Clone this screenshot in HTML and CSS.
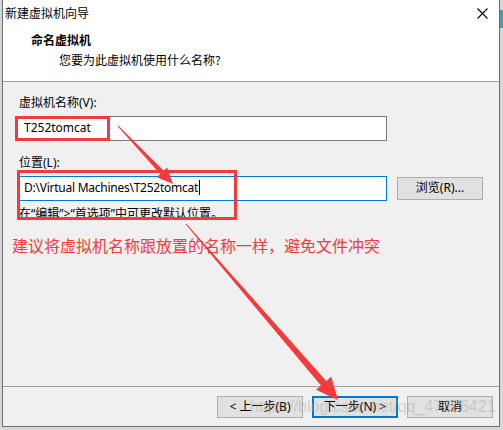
FILE: index.html
```html
<!DOCTYPE html>
<html lang="zh-CN">
<head>
<meta charset="utf-8">
<title>新建虚拟机向导</title>
<link rel="stylesheet" href="styles.css">
</head>
<body>
<div class="desk-strip"></div>
<div class="window">
  <div class="titlebar">
    <span class="title">新建虚拟机向导</span>
    <svg class="close" width="11" height="11" viewBox="0 0 11 11"><path d="M0.5 0.5L10.5 10.5M10.5 0.5L0.5 10.5" stroke="#000" stroke-width="1.1" fill="none"/></svg>
  </div>
  <div class="header">
    <div class="h-title">命名虚拟机</div>
    <div class="h-sub">您要为此虚拟机使用什么名称?</div>
  </div>
  <div class="content">
    <div class="label">虚拟机名称(V):</div>
    <div class="row">
      <div class="input">T252tomcat</div>
    </div>
    <div class="label label2">位置(L):</div>
    <div class="row">
      <div class="input focus tight">D:\Virtual Machines\T252tomcat<span class="caret"></span></div>
      <div class="btn browse">浏览(R)...</div>
    </div>
    <div class="hint">在“编辑”&gt;“首选项”中可更改默认位置。</div>
    <div class="note">建议将虚拟机名称跟放置的名称一样，避免文件冲突</div>
  </div>
  <div class="footer">
    <div class="btn">&lt; 上一步(B)</div>
    <div class="btn default">下一步(N) &gt;</div>
    <div class="btn">取消</div>
  </div>
</div>
<div class="watermark">https://blog.csdn.net/qq_47396421</div>
<svg class="annot" width="503" height="430" viewBox="0 0 503 430">
  <rect x="16.5" y="117.5" width="92" height="22" fill="none" stroke="#f33b3b" stroke-width="3"/>
  <rect x="18.5" y="171.5" width="217" height="47" fill="none" stroke="#f33b3b" stroke-width="3"/>
  <polygon fill="#f33b3b" points="117.6,126.3 160.2,174.1 156.9,177.2 173,184 167.1,167.6 163.8,170.7 118.4,125.7"/>
  <polygon fill="#f33b3b" points="185.6,224.3 320.95,385.6 316.0,389.8 338,400 331.2,376.8 326.25,381.0 186.4,223.7"/>
</svg>
</body>
</html>
```
FILE: styles.css
```css
html, body {
  margin: 0;
  padding: 0;
}
body {
  width: 503px;
  height: 430px;
  background: #d6d6d6;
  position: relative;
  overflow: hidden;
  font-family: "Noto Sans", "Noto Sans CJK SC", sans-serif;
  font-size: 12px;
  color: #000;
}
.desk-strip {
  position: absolute;
  left: 500px;
  top: 10px;
  width: 3px;
  height: 18px;
  background: #4f9ab3;
}
.window {
  margin-left: 2px;
  width: 496px;
  height: 426px;
  border-left: 1px solid #6e6e6e;
  border-right: 1px solid #6e6e6e;
  border-bottom: 1px solid #6e6e6e;
  background: #f0f0f0;
  display: flex;
  flex-direction: column;
}
.titlebar {
  height: 30px;
  background: #fff;
  display: flex;
  align-items: flex-start;
  justify-content: space-between;
  padding: 5px 11px 0 2px;
  box-sizing: border-box;
}
.title {
  font-family: "Noto Sans CJK SC", sans-serif;
  line-height: 16px;
}
.close {
  margin-top: 3px;
}
.header {
  height: 52px;
  background: #fff;
  border-bottom: 1px solid #a0a0a0;
  box-sizing: border-box;
  padding-top: 2px;
}
.h-title {
  font-family: "Noto Sans CJK SC", sans-serif;
  font-weight: bold;
  line-height: 16px;
  padding-left: 28px;
}
.h-sub {
  font-family: "Noto Sans CJK SC", sans-serif;
  line-height: 16px;
  padding-left: 56px;
  margin-top: 4px;
}
.content {
  flex: 1;
  padding: 13px 0 0 14px;
  border-bottom: 1px solid #a0a0a0;
}
.label {
  line-height: 16px;
  padding-left: 2px;
  margin-bottom: 5px;
}
.label2 {
  margin-top: 14px;
}
.row {
  display: flex;
  align-items: center;
  gap: 10px;
}
.input {
  width: 370px;
  height: 25px;
  box-sizing: border-box;
  border: 1px solid #7a7a7a;
  background: #fff;
  padding-left: 6px;
  line-height: 22px;
  white-space: nowrap;
}
.input.focus {
  border-color: #0078d7;
}
.input.tight {
  letter-spacing: -0.25px;
}
.caret {
  display: inline-block;
  width: 1px;
  height: 15px;
  background: #000;
  vertical-align: -3px;
  margin-left: 1px;
}
.btn {
  width: 86px;
  height: 22px;
  box-sizing: border-box;
  border: 1px solid #adadad;
  background: #e1e1e1;
  text-align: center;
  line-height: 20px;
}
.browse {
  height: 23px;
}
.hint {
  line-height: 16px;
  margin-top: 5px;
  padding-left: 2px;
}
.note {
  font-family: "Noto Sans CJK SC", sans-serif;
  font-size: 16px;
  line-height: 22px;
  color: #f33b3b;
  margin-top: 12px;
  margin-left: -5px;
}
.footer {
  height: 39px;
  display: flex;
  justify-content: flex-end;
  gap: 9px;
  padding: 9px 6px 0 0;
  box-sizing: border-box;
}
.btn.default {
  border: 2px solid #0078d7;
  line-height: 18px;
}
.watermark {
  position: absolute;
  left: 250px;
  top: 398px;
  font-family: "Liberation Sans", sans-serif;
  font-size: 16px;
  color: rgba(170, 170, 170, 0.45);
  white-space: nowrap;
}
.annot {
  position: absolute;
  left: 0;
  top: 0;
  pointer-events: none;
}
```
